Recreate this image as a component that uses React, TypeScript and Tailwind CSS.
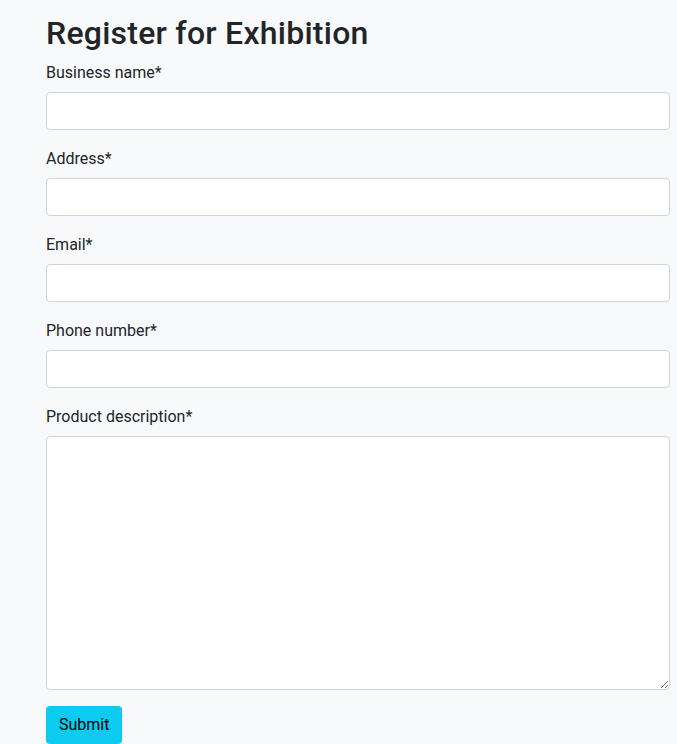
import React from 'react';

const fields = ['Business name*', 'Address*', 'Email*', 'Phone number*'];

export default function App() {
  return (
    <div className="min-h-[744px] bg-[#f8f9fa] pl-[46px] pr-[7px] pt-[14px] text-[#212529] font-['Roboto',sans-serif]">
      <h1 className="mb-2 text-[32px] font-medium leading-[1.2] tracking-[0.25px]">Register for Exhibition</h1>
      <form onSubmit={(e) => e.preventDefault()}>
        {fields.map((label) => (
          <div key={label} className="mb-4">
            <label className="mb-2 block pt-px text-base leading-[23px]">{label}</label>
            <input
              type="text"
              className="block h-[38px] w-full rounded-[4px] border border-[#ced4da] bg-white px-3 text-base outline-none"
            />
          </div>
        ))}
        <div className="mb-4">
          <label className="mb-2 block pt-px text-base leading-[23px]">Product description*</label>
          <textarea className="block h-[254px] w-full rounded-[4px] border border-[#ced4da] bg-white px-3 py-1.5 text-base outline-none" />
        </div>
        <button
          type="submit"
          className="h-[38px] rounded-[4px] bg-[#0dcaf0] px-[13px] text-base leading-6 text-black"
        >
          Submit
        </button>
      </form>
    </div>
  );
}
